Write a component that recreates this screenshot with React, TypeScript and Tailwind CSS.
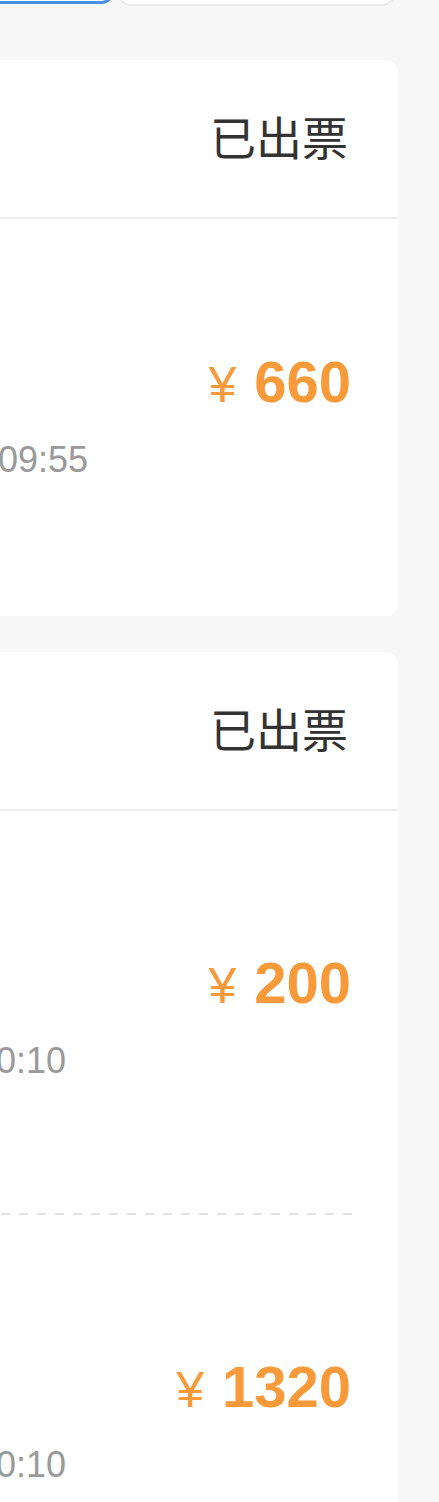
import type { FC } from "react";

interface Segment {
	price: string;
	time: string;
	timeBox: string;
	pad: string;
}

interface Order {
	status: string;
	segments: Segment[];
}

const ORDERS: Order[] = [
	{
		status: "已出票",
		segments: [
			{ price: "660", time: "2019-09-26 09:55", timeBox: "w-[108px]", pad: "pt-[131px] pb-[134px]" },
		],
	},
	{
		status: "已出票",
		segments: [
			{ price: "200", time: "2019-09-28 10:10", timeBox: "w-[86px]", pad: "pt-[140px] pb-[130px]" },
			{ price: "1320", time: "2019-10-03 20:10", timeBox: "w-[86px]", pad: "pt-[140px] pb-[60px]" },
		],
	},
];

const SegmentRow: FC<{ segment: Segment }> = ({ segment }) => (
	<div className={segment.pad}>
		<div className="flex h-[64px] items-center justify-end pr-[47px]">
			<div className="flex items-baseline text-[#f89a3a] leading-none">
				<span className="text-[50px] font-normal">¥</span>
				<span className="ml-[18px] text-[58px] font-bold">{segment.price}</span>
			</div>
		</div>
		<div className={`mt-[24px] flex h-[44px] items-center justify-end overflow-hidden ${segment.timeBox}`}>
			<span className="shrink-0 whitespace-nowrap text-[36px] text-[#9a9a9a]">{segment.time}</span>
		</div>
	</div>
);

const OrderCard: FC<{ order: Order; className: string }> = ({ order, className }) => (
	<div className={`-ml-[20px] mr-[41px] overflow-hidden rounded-xl bg-white ${className}`}>
		<div className="flex h-[159px] items-center justify-end border-b-2 border-[#ededed] pr-[50px] pb-[6px]">
			<span className="font-['Noto_Sans_CJK_SC',sans-serif] text-[46px] text-[#333]">{order.status}</span>
		</div>
		{order.segments.map((seg, i) => (
			<div key={seg.price}>
				{i > 0 && (
					<div className="mr-[46px] h-[2px] bg-[repeating-linear-gradient(to_left,#e2e2e2_0_9px,transparent_9px_18px)]" />
				)}
				<SegmentRow segment={seg} />
			</div>
		))}
	</div>
);

export default function App() {
	return (
		<div className="min-h-[1502px] w-[439px] overflow-hidden bg-[#f7f7f7] font-['Liberation_Sans','Noto_Sans_CJK_SC',sans-serif]">
			{/* tab bar, only its bottom edge is in view */}
			<div className="-mt-[45px] flex h-[50px] items-start gap-[2px]">
				<div className="-ml-[100px] h-[49px] w-[215px] shrink-0 rounded-[14px] border-[3px] border-[#4a90e2] bg-white" />
				<div className="h-[51px] w-[279px] shrink-0 rounded-[14px] border-2 border-[#ebebeb] bg-white" />
			</div>

			<OrderCard order={ORDERS[0]} className="mt-[55px]" />
			<OrderCard order={ORDERS[1]} className="mt-[36px]" />
		</div>
	);
}
